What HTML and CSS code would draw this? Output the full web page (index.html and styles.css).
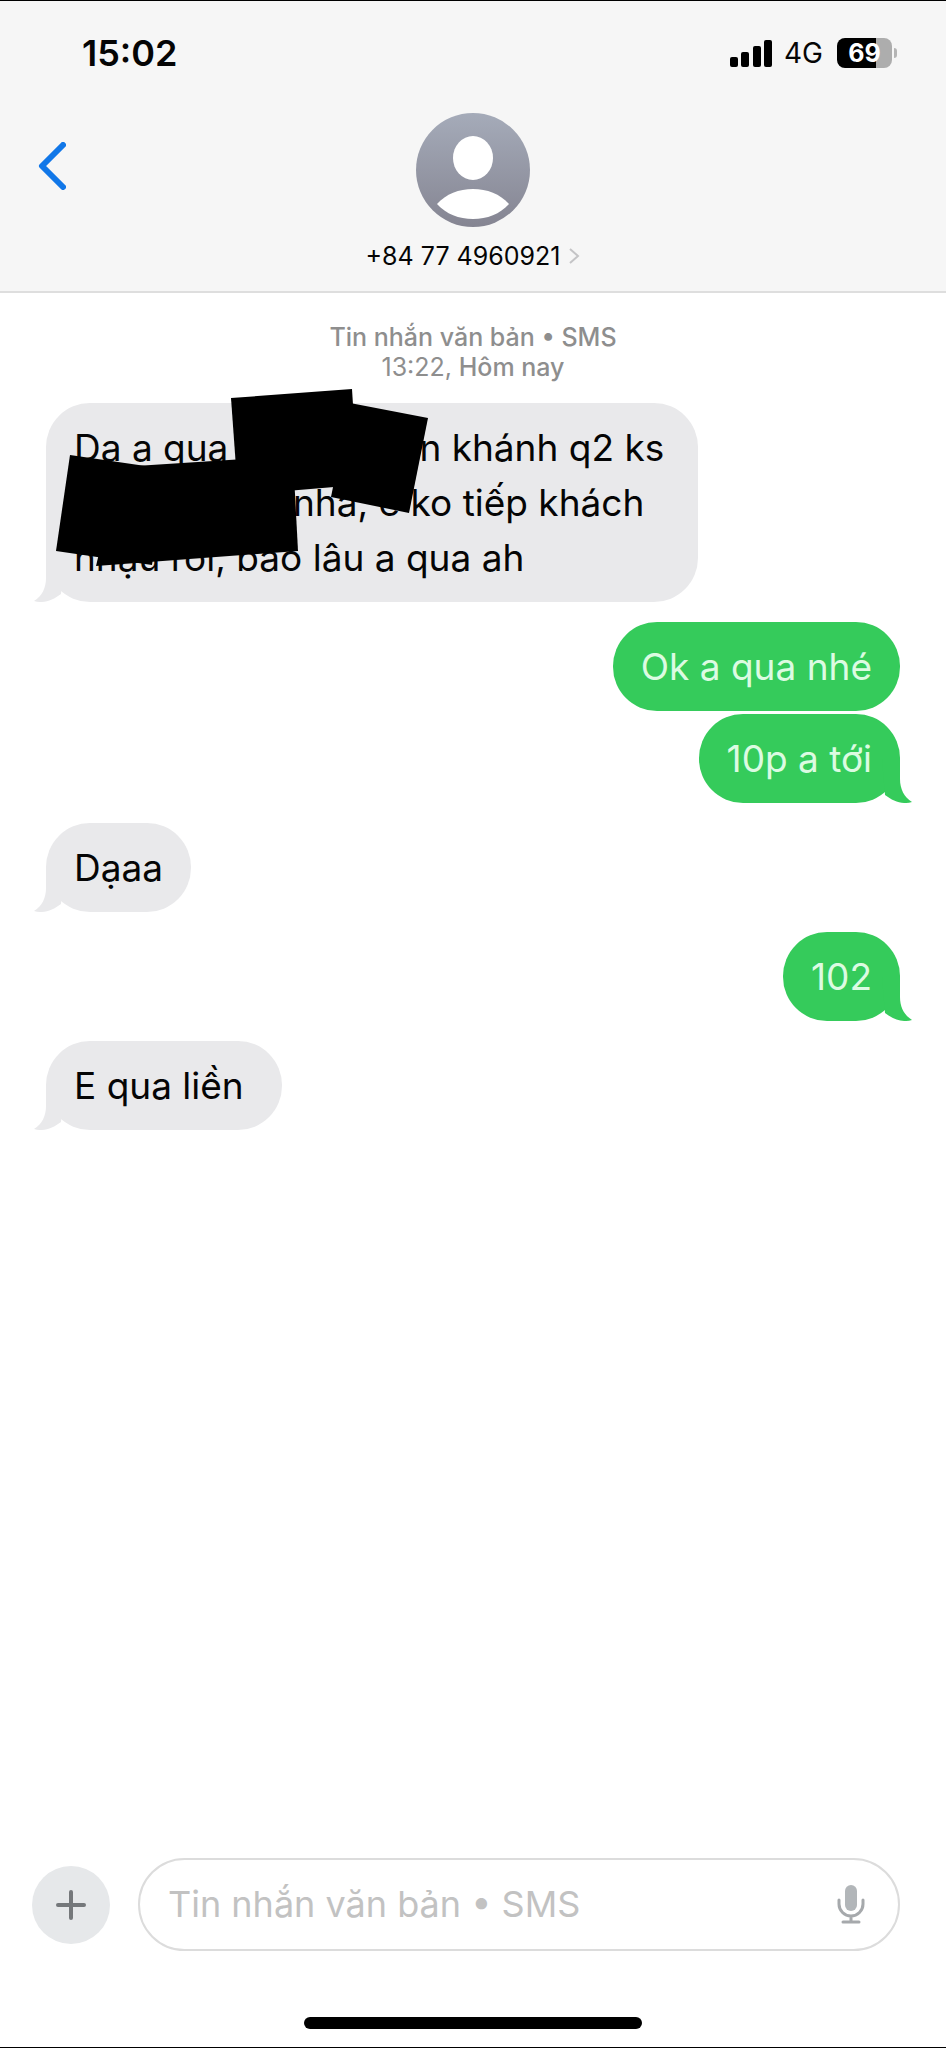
FILE: index.html
```html
<!DOCTYPE html>
<html lang="vi">
<head>
<meta charset="utf-8">
<meta name="viewport" content="width=device-width, initial-scale=1">
<title>+84 77 4960921</title>
<link rel="stylesheet" href="styles.css">
</head>
<body>
<div class="screen">
  <header class="header">
    <div class="status">
      <time class="clock">15:02</time>
      <div class="indicators">
        <svg class="signal" viewBox="0 0 42 27" aria-hidden="true">
          <rect x="0" y="17" width="8" height="10" rx="2"/>
          <rect x="11" y="12" width="8" height="15" rx="2"/>
          <rect x="23" y="6" width="8" height="21" rx="2"/>
          <rect x="34" y="0" width="8" height="27" rx="2"/>
        </svg>
        <span class="network">4G</span>
        <div class="battery"><span class="battery-body">69</span><span class="battery-tip"></span></div>
      </div>
    </div>
    <div class="nav">
      <button class="back" type="button" aria-label="Quay lại">
        <svg class="back-icon" viewBox="0 0 28 48" aria-hidden="true"><path d="M25 3 4 24 25 45"/></svg>
      </button>
      <button class="contact" type="button">
        <svg class="avatar" viewBox="0 0 114 114" aria-hidden="true">
          <defs>
            <linearGradient id="avatar-fill" x1="0" y1="0" x2="0" y2="1">
              <stop offset="0" stop-color="#a5abb9"/>
              <stop offset="1" stop-color="#858592"/>
            </linearGradient>
          </defs>
          <circle cx="57" cy="57" r="57" fill="url(#avatar-fill)"/>
          <ellipse cx="57" cy="45" rx="20" ry="22" fill="#fff"/>
          <path d="M21 91C30 81 43 76 57 76s27 5 36 15c-9 10-22 15-36 15s-27-5-36-15Z" fill="#fff"/>
        </svg>
        <span class="contact-name">+84 77 4960921
          <svg class="chevron" viewBox="0 0 12 18" aria-hidden="true"><path d="M2 2l8 7-8 7"/></svg>
        </span>
      </button>
    </div>
  </header>

  <main class="thread">
    <p class="stamp"><span>Tin nhắn văn bản • SMS</span><span><span class="stamp-time">13:22,</span> Hôm nay</span></p>

    <div class="bubble received">
      <div>Dạ a qua<span class="gap gap-wide"></span>n khánh q2 ks&nbsp;</div>
      <div><span class="gap gap-lead"></span>nha, e ko tiếp khách</div>
      <div>nhậu rồi, bao lâu a qua ah</div>
      <svg class="tail-icon" viewBox="0 0 30 44" aria-hidden="true"><path d="M12 0v20C12 30 8 38 0 43c10 3 19-1 27-7L30 0Z"/></svg>
      <svg class="redaction" viewBox="0 0 372 178" aria-hidden="true">
        <path d="M175 9 296 0 302 96 182 106Z"/>
        <path d="M294 14 372 29 353 124 275 108Z"/>
        <path d="M14 66 110 80 96 176 0 162Z"/>
        <path d="M64 78 237 67 242 162 40 177Z"/>
      </svg>
    </div>
    <div class="bubble sent">Ok a qua nhé</div>
    <div class="bubble sent follow">10p a tới
      <svg class="tail-icon" viewBox="0 0 30 44" aria-hidden="true"><path d="M12 0v20C12 30 8 38 0 43c10 3 19-1 27-7L30 0Z"/></svg>
    </div>
    <div class="bubble received">Dạaa
      <svg class="tail-icon" viewBox="0 0 30 44" aria-hidden="true"><path d="M12 0v20C12 30 8 38 0 43c10 3 19-1 27-7L30 0Z"/></svg>
    </div>
    <div class="bubble sent">102
      <svg class="tail-icon" viewBox="0 0 30 44" aria-hidden="true"><path d="M12 0v20C12 30 8 38 0 43c10 3 19-1 27-7L30 0Z"/></svg>
    </div>
    <div class="bubble received">E qua liền&nbsp;
      <svg class="tail-icon" viewBox="0 0 30 44" aria-hidden="true"><path d="M12 0v20C12 30 8 38 0 43c10 3 19-1 27-7L30 0Z"/></svg>
    </div>
  </main>

  <footer class="footer">
    <form class="composer">
      <button class="add" type="button" aria-label="Thêm">
        <svg class="add-icon" viewBox="0 0 30 30" aria-hidden="true"><path d="M15 2v26M2 15h26"/></svg>
      </button>
      <div class="field">
        <input class="field-input" type="text" aria-label="Tin nhắn" placeholder="Tin nhắn văn bản • SMS">
        <button class="mic" type="button" aria-label="Đọc chính tả">
          <svg class="mic-icon" viewBox="0 0 28 39" aria-hidden="true">
            <rect x="8" y="0" width="12" height="26" rx="6"/>
            <path d="M2 15v4a12 12 0 0 0 24 0v-4M14 31v6M6 37h16"/>
          </svg>
        </button>
      </div>
    </form>
    <div class="home-bar"></div>
  </footer>
</div>
</body>
</html>
```
FILE: styles.css
```css
* { box-sizing: border-box; }

body {
  margin: 0;
  background: #fff;
  color: #050505;
  font-family: Inter, "Liberation Sans", sans-serif;
}

button {
  border: 0;
  padding: 0;
  background: none;
  color: inherit;
  font: inherit;
}

svg { display: block; }

.screen {
  display: flex;
  flex-direction: column;
  min-height: 100vh;
  border-top: 1px solid #000;
  border-bottom: 1px solid #000;
}

.header {
  background: #f6f6f6;
  border-bottom: 2px solid #dedede;
  padding-bottom: 20px;
}

.status {
  display: flex;
  justify-content: space-between;
  align-items: center;
  padding: 32px 49px 0 82px;
}

.clock {
  font-size: 36px;
  font-weight: 600;
  line-height: 40px;
}

.indicators {
  display: flex;
  align-items: center;
}

.signal {
  width: 42px;
  height: 27px;
  margin-right: 12px;
}

.network {
  font-size: 28px;
  line-height: 40px;
  margin-right: 14px;
}

.battery {
  display: flex;
  align-items: center;
  gap: 2px;
}

.battery-body {
  width: 55px;
  height: 30px;
  border-radius: 8px;
  background: linear-gradient(90deg, #000 70%, #adadad 70%);
  color: #fff;
  font-size: 25px;
  font-weight: 700;
  line-height: 30px;
  text-align: center;
}

.battery-tip {
  width: 3px;
  height: 10px;
  border-radius: 0 4px 4px 0;
  background: #b5b5b5;
}

.nav {
  display: grid;
  grid-template-columns: 1fr auto 1fr;
  padding: 40px 38px 0;
}

.back {
  justify-self: start;
  align-self: start;
  margin-top: 29px;
}

.back-icon {
  width: 28px;
  height: 48px;
  fill: none;
  stroke: #1177e8;
  stroke-width: 6;
  stroke-linecap: round;
  stroke-linejoin: round;
}

.contact {
  display: flex;
  flex-direction: column;
  align-items: center;
  gap: 14px;
}

.avatar {
  width: 114px;
  height: 114px;
}

.contact-name {
  display: flex;
  align-items: center;
  gap: 8px;
  font-size: 25px;
  line-height: 30px;
}

.chevron {
  width: 12px;
  height: 18px;
  fill: none;
  stroke: #c4c4c6;
  stroke-width: 2;
}

.thread {
  flex: 1;
  display: flex;
  flex-direction: column;
  padding: 29px 46px;
}

.stamp {
  display: flex;
  flex-direction: column;
  align-items: center;
  margin: 0;
  padding-bottom: 1px;
  color: #8e8e8e;
  font-size: 25px;
  font-weight: 500;
  line-height: 30px;
}

.stamp-time { font-weight: 400; }

.bubble {
  position: relative;
  max-width: 652px;
  margin-top: 20px;
  padding: 17px 28px;
  border-radius: 44px;
  font-size: 37px;
  line-height: 55px;
  white-space: nowrap;
}

.received {
  align-self: flex-start;
  background: #e9e9eb;
  fill: #e9e9eb;
}

.sent {
  align-self: flex-end;
  background: #35cb5b;
  color: #dcfbe2;
  fill: #35cb5b;
}

.follow { margin-top: 3px; }

.tail-icon {
  position: absolute;
  bottom: 0;
  left: -12px;
  width: 30px;
  height: 44px;
}

.sent .tail-icon {
  left: auto;
  right: -12px;
  transform: scaleX(-1);
}

.gap { display: inline-block; }
.gap-wide { width: 191px; }
.gap-lead { width: 219px; }

.redaction {
  position: absolute;
  top: -14px;
  left: 10px;
  width: 372px;
  height: 178px;
  fill: #000;
}

.footer { padding-bottom: 18px; }

.composer {
  display: flex;
  align-items: center;
  gap: 28px;
  padding: 0 46px 0 32px;
}

.add {
  display: grid;
  place-items: center;
  width: 78px;
  height: 78px;
  border-radius: 50%;
  background: #e6e8ea;
}

.add-icon {
  width: 30px;
  height: 30px;
  stroke: #75787b;
  stroke-width: 4;
  stroke-linecap: round;
}

.field {
  flex: 1;
  display: flex;
  align-items: center;
  height: 93px;
  padding: 0 33px 0 28px;
  border: 2px solid #dcdcdc;
  border-radius: 47px;
}

.field-input {
  flex: 1;
  min-width: 0;
  border: 0;
  padding: 0;
  outline: 0;
  background: none;
  font: inherit;
  font-size: 36px;
  line-height: 55px;
}

.field-input::placeholder { color: #c2c2c2; }

.mic-icon {
  width: 28px;
  height: 39px;
  fill: #b2b6b9;
}

.mic-icon path {
  fill: none;
  stroke: #a6a9ac;
  stroke-width: 3;
  stroke-linecap: round;
}

.home-bar {
  width: 338px;
  max-width: 60%;
  height: 12px;
  margin: 66px auto 0;
  border-radius: 6px;
  background: #000;
}
```
